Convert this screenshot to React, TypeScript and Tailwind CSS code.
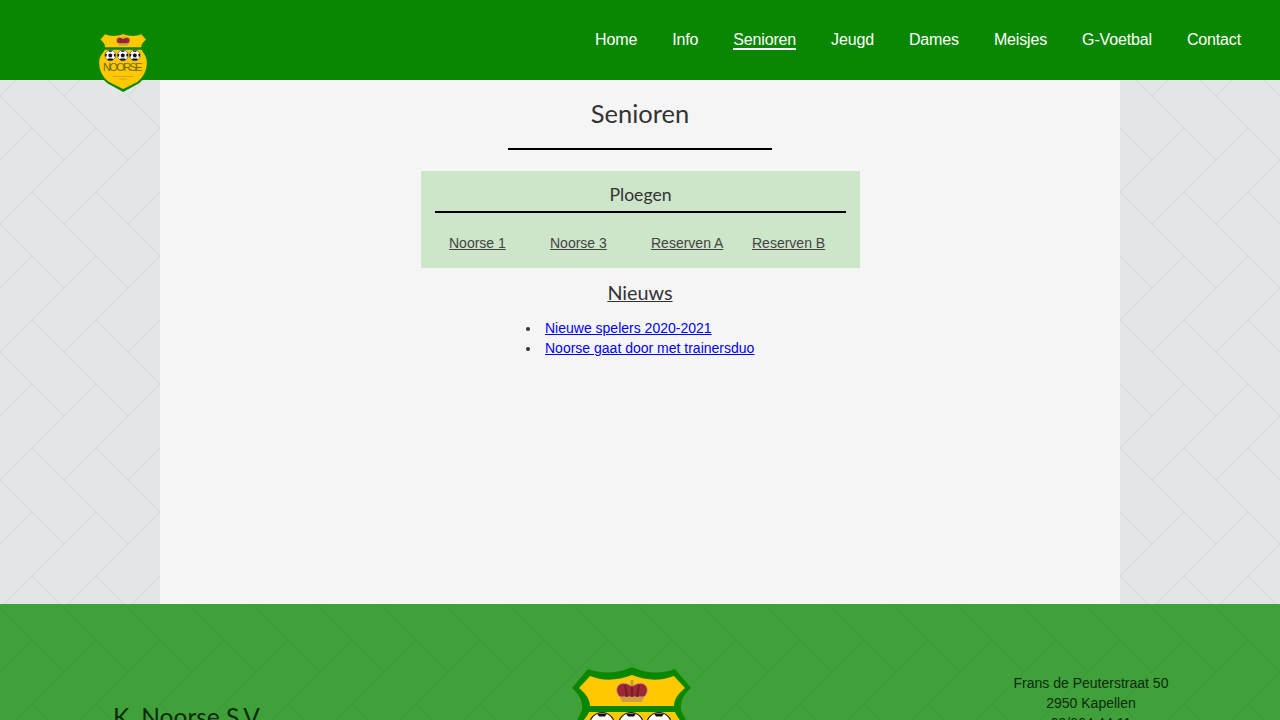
import React from 'react';

const navItems = ['Home', 'Info', 'Senioren', 'Jeugd', 'Dames', 'Meisjes', 'G-Voetbal', 'Contact'];
const teams = ['Noorse 1', 'Noorse 3', 'Reserven A', 'Reserven B'];
const news = ['Nieuwe spelers 2020-2021', 'Noorse gaat door met trainersduo'];

const Herringbone: React.FC<{ id: string; stroke: string; offsetY: number }> = ({ id, stroke, offsetY }) => (
  <svg className="absolute inset-0 h-full w-full" aria-hidden="true">
    <defs>
      <pattern
        id={id}
        width="64"
        height="128"
        patternUnits="userSpaceOnUse"
        patternTransform={`translate(0 ${offsetY})`}
      >
        <path
          d="M32 64L64 96M0 96L32 128M32 0L64 32M64 32L0 96M32 0L0 32"
          fill="none"
          stroke={stroke}
          strokeWidth="1.5"
        />
      </pattern>
    </defs>
    <rect width="100%" height="100%" fill={`url(#${id})`} />
  </svg>
);

const Ball: React.FC<{ cx: number }> = ({ cx }) => (
  <g>
    <circle cx={cx} cy="59" r="12.5" fill="#ffffff" stroke="#222222" strokeWidth="1.2" />
    <path d={`M${cx} 54l5 3.5-2 6h-6l-2-6z`} fill="#111111" />
    <path d={`M${cx - 5} 47.5h10l-2 3h-6z`} fill="#111111" />
    <path d={`M${cx - 12} 55l4 1-1 6-3-1zM${cx + 12} 55l-4 1 1 6 3-1z`} fill="#111111" />
    <path d={`M${cx - 7} 69l2-3h10l2 3-4 2h-6z`} fill="#111111" />
  </g>
);

const Logo: React.FC<{ className: string }> = ({ className }) => (
  <svg viewBox="0 0 121 144" className={className} aria-hidden="true">
    <path
      d="M61 1C45 8 30 8 17 3L1 22C8 28 12 35 11 44C8 52 0 62 0 78C0 100 10 112 24 124L61 144L98 124C111 112 121 100 121 78C121 62 113 52 110 44C109 35 113 28 120 22L104 3C91 8 76 8 61 1Z"
      fill="#0a8700"
    />
    <path
      d="M61 9C46 15 31 15 19 10L8 22C14 27 19 33 19 40L103 40C103 33 108 27 114 22L103 10C90 15 76 15 61 9Z"
      fill="#ffc800"
    />
    <path
      d="M18 46L104 46C106 52 116 60 116 75C116 96 107 110 94 121L61 137L28 121C14 110 5 96 5 75C5 60 16 52 18 46Z"
      fill="#ffc800"
    />
    {/* kroon */}
    <path
      d="M49 31C45 28 44 21 49 18C54 16 58 18 61 21C64 18 68 16 73 18C78 21 77 28 73 31Z"
      fill="#9c2a35"
      stroke="#d9a27a"
      strokeWidth="1"
    />
    <path d="M54 19L56 31M61 20V31M68 19L66 31" fill="none" stroke="#6f1a26" strokeWidth="1.6" />
    <rect x="59.5" y="14" width="3" height="6" fill="#c69a3c" />
    <path d="M49 31H73L71 36H51Z" fill="#c9a042" />
    <Ball cx={31} />
    <Ball cx={60} />
    <Ball cx={88} />
    <text
      x="60"
      y="96"
      textAnchor="middle"
      fill="#6f6a12"
      className="font-['Liberation_Sans',sans-serif]"
      fontSize="26"
      textLength="92"
    >
      NOORSE
    </text>
    <path d="M36 108H86M52 114H70" stroke="#9a8410" strokeWidth="1.5" opacity="0.7" />
  </svg>
);

export default function App() {
  return (
    <div className="relative flex h-[720px] flex-col overflow-hidden bg-[#e4e5e7] font-['Liberation_Sans',Arial,sans-serif] text-[#333333]">
      <Herringbone id="page-tiles" stroke="#dcdddf" offsetY={0} />

      <header className="relative z-10 flex h-20 shrink-0 items-start justify-end gap-[35px] bg-[#0a8700] pt-[31px] pr-[39px]">
        <Logo className="absolute left-[97px] top-[30px] h-[62px] w-[52px]" />
        {navItems.map((item) => (
          <a
            key={item}
            href="#"
            className={
              item === 'Senioren'
                ? 'border-b-2 border-white text-base leading-[17px] tracking-[-0.15px] text-white'
                : 'border-b-2 border-transparent text-base leading-[17px] tracking-[-0.15px] text-white'
            }
          >
            {item}
          </a>
        ))}
      </header>

      <main className="relative mx-auto flex h-[524px] w-[960px] shrink-0 flex-col items-center bg-[#f5f5f5]">
        <h1 className="mt-[15px] font-['Lato',sans-serif] text-[25.5px] leading-[36px] text-[#333333]">Senioren</h1>
        <div className="mt-[17px] h-[2px] w-[264px] bg-black" />

        <section className="mt-[21px] ml-[1px] h-[97px] w-[439px] bg-[#cde5c8] px-[14px] pt-[12px]">
          <h2 className="text-center font-['Lato',sans-serif] text-[17.6px] leading-[24px]">Ploegen</h2>
          <div className="mt-[4px] h-[2px] w-[411px] bg-black" />
          <div className="mt-[22px] grid grid-cols-[repeat(4,101px)] pl-[14px]">
            {teams.map((team) => (
              <a key={team} href="#" className="text-sm leading-[16px] text-[#444444] underline">
                {team}
              </a>
            ))}
          </div>
        </section>

        <h2 className="mt-[11px] font-['Lato',sans-serif] text-[19.8px] leading-[26px] underline">Nieuws</h2>
        <ul className="mt-[13px] ml-[30px] w-[228px] list-disc text-sm leading-[20px]">
          {news.map((item) => (
            <li key={item} className="whitespace-nowrap pl-[4px]">
              <a href="#" className="text-[#0000ff] underline">
                {item}
              </a>
            </li>
          ))}
        </ul>
      </main>

      <footer className="relative z-10 h-[300px] shrink-0 overflow-hidden bg-[#40a03a] text-[#0d2b0b]">
        <Herringbone id="footer-tiles" stroke="#3d9c37" offsetY={-604} />
        <div className="relative flex items-start pt-[62px]">
          <div className="mt-[36px] ml-[113px] w-[340px] font-['Lato',sans-serif] text-[24.5px] leading-[30px]">K. Noorse S.V</div>
          <Logo className="ml-[118px] h-[144px] w-[121px]" />
          <div className="ml-[299px] w-[200px] pt-[7px] text-center text-sm leading-[20px]">
            <p>Frans de Peuterstraat 50</p>
            <p>2950 Kapellen</p>
            <p>03/664.44.11</p>
          </div>
        </div>
      </footer>
    </div>
  );
}
